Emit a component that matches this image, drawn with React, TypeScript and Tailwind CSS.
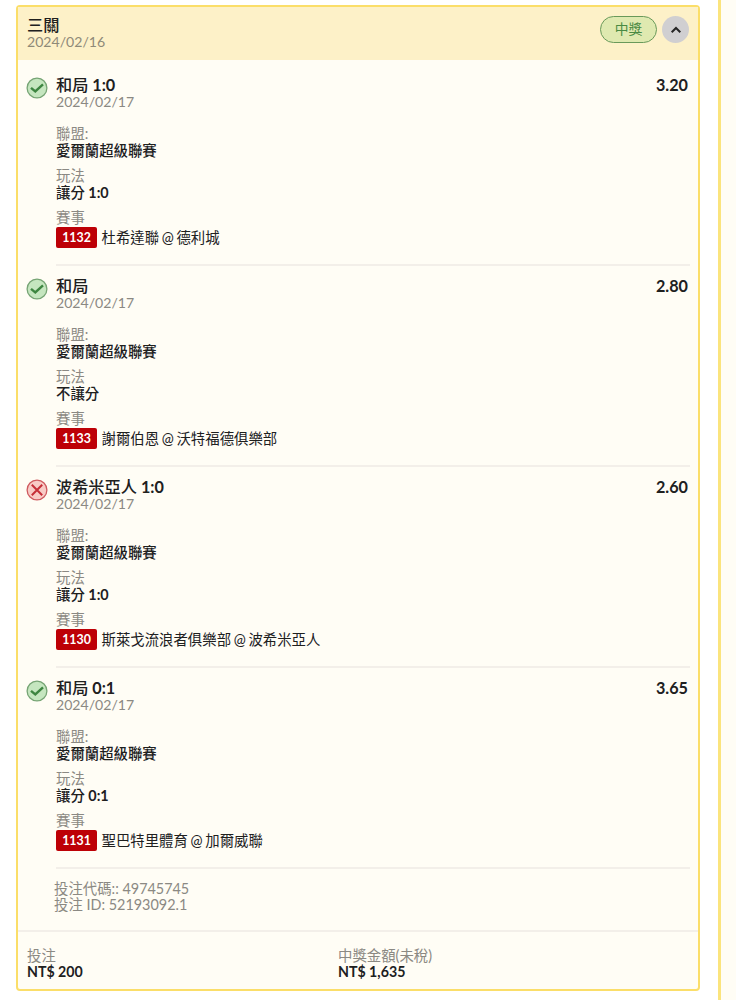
import { clsx } from "clsx";

interface Leg {
  pick: string;
  date: string;
  odds: string;
  won: boolean;
  league: string;
  market: string;
  code: string;
  match: string;
}

const LEGS: Leg[] = [
  {
    pick: "和局 1:0",
    date: "2024/02/17",
    odds: "3.20",
    won: true,
    league: "愛爾蘭超級聯賽",
    market: "讓分 1:0",
    code: "1132",
    match: "杜希達聯 @ 德利城",
  },
  {
    pick: "和局",
    date: "2024/02/17",
    odds: "2.80",
    won: true,
    league: "愛爾蘭超級聯賽",
    market: "不讓分",
    code: "1133",
    match: "謝爾伯恩 @ 沃特福德俱樂部",
  },
  {
    pick: "波希米亞人 1:0",
    date: "2024/02/17",
    odds: "2.60",
    won: false,
    league: "愛爾蘭超級聯賽",
    market: "讓分 1:0",
    code: "1130",
    match: "斯萊戈流浪者俱樂部 @ 波希米亞人",
  },
  {
    pick: "和局 0:1",
    date: "2024/02/17",
    odds: "3.65",
    won: true,
    league: "愛爾蘭超級聯賽",
    market: "讓分 0:1",
    code: "1131",
    match: "聖巴特里體育 @ 加爾威聯",
  },
];

function ResultIcon({ won }: { won: boolean }) {
  return (
    <svg
      viewBox="0 0 22 22"
      fill="none"
      className={clsx("h-[22px] w-[22px] shrink-0", won ? "text-[#3d8540]" : "text-[#c62f38]")}
    >
      <circle
        cx="11"
        cy="11"
        r="9.9"
        fill={won ? "#c5e6bf" : "#f8cbc6"}
        stroke={won ? "#76a474" : "#cf5a5f"}
        strokeWidth="1.3"
      />
      {won ? (
        <path d="M5 10.8 9.3 14.5 17 7.3" stroke="currentColor" strokeWidth="2.4" />
      ) : (
        <path d="M5.8 5.8 16.2 16.2M16.2 5.8 5.8 16.2" stroke="currentColor" strokeWidth="2" />
      )}
    </svg>
  );
}

/** Chinese stays medium, a trailing score such as "1:0" goes bold. */
function Scored({ text }: { text: string }) {
  const [name, score] = text.split(" ");
  return (
    <span className="font-medium">
      {name}
      {score && <span className="font-bold"> {score}</span>}
    </span>
  );
}

function LegRow({ leg, first }: { leg: Leg; first: boolean }) {
  return (
    <div className={clsx("flex pr-2 pl-2", first ? "pt-[17px]" : "pt-[12px]")}>
      <div className="w-[30px] shrink-0">
        <ResultIcon won={leg.won} />
      </div>
      <div className="min-w-0 flex-1 border-b-2 border-[#f3efe9] pb-4">
        <div className="flex h-[17px] items-center justify-between text-[16.2px] text-[#20201e]">
          <Scored text={leg.pick} />
          <span className="pr-[2px] font-bold">{leg.odds}</span>
        </div>
        <div className="h-4 text-[14.1px] leading-4 text-[#8b8983]">{leg.date}</div>
        <div className="mt-4 h-4 leading-4 text-[#8b8983]">聯盟:</div>
        <div className="h-[17px] leading-[17px] text-[#20201e]">
          <Scored text={leg.league} />
        </div>
        <div className="mt-[9px] h-4 leading-4 text-[#8b8983]">玩法</div>
        <div className="h-[17px] leading-[17px] text-[#20201e]">
          <Scored text={leg.market} />
        </div>
        <div className="mt-[9px] h-4 leading-4 text-[#8b8983]">賽事</div>
        <div className="mt-px flex h-[21px] items-center">
          <span className="flex h-[21px] w-[41px] items-center justify-center rounded-[2px] bg-[#bd0006] pt-px text-[12.4px] font-bold text-white">
            {leg.code}
          </span>
          <span className="ml-[4.5px] [word-spacing:-1px] text-[#20201e]">{leg.match}</span>
        </div>
      </div>
    </div>
  );
}

function Total({ label, value, className }: { label: string; value: string; className?: string }) {
  return (
    <div className={clsx("leading-4", className)}>
      <div className="text-[#8b8983]">{label}</div>
      <div className="text-[14.2px] font-bold text-[#20201e]">{value}</div>
    </div>
  );
}

export default function App() {
  return (
    <div className="flex h-[1000px] w-[736px] overflow-hidden bg-white pl-4 font-['Lato','Noto_Sans_CJK_TC',sans-serif] text-[14.4px]">
      <div className="mt-[5px] flex h-[986px] w-[684px] shrink-0 flex-col rounded-[4px] border-[2.5px] border-[#fbde69] bg-[#fffdf5]">
        <div className="flex h-[53px] shrink-0 items-start justify-between bg-[#fdf1c8] pr-[9px] pl-[9px]">
          <div className="pt-[9px]">
            <div className="h-[18px] text-[16.2px] leading-[18px] font-medium text-[#20201e]">三關</div>
            <div className="h-4 text-[14.1px] leading-4 text-[#8f8a78]">2024/02/16</div>
          </div>
          <div className="flex items-center gap-[5px] pt-[9px]">
            <span className="flex h-[27px] w-[57px] items-center justify-center rounded-full border-[1.5px] border-[#69995a] bg-[#dfe9b0] text-[13.8px] text-[#4a8a43]">
              中獎
            </span>
            <button className="flex h-[27px] w-[27px] items-center justify-center rounded-full bg-[#d0cfd1]">
              <svg viewBox="0 0 12 8" fill="none" className="h-2 w-3">
                <path d="M1.7 6.3 6 2 10.3 6.3" stroke="#252525" strokeWidth="2" />
              </svg>
            </button>
          </div>
        </div>

        {LEGS.map((leg, i) => (
          <LegRow key={leg.code} leg={leg} first={i === 0} />
        ))}

        <div className="h-[61px] shrink-0 pt-[12px] pl-9 leading-4 text-[#8b8983]">
          <div>投注代碼:: 49745745</div>
          <div>投注 ID: 52193092.1</div>
        </div>

        <div className="flex flex-1 border-t-2 border-[#f3efe9] pt-[16px] pl-[9px]">
          <Total label="投注" value="NT$ 200" className="w-[311px]" />
          <Total label="中獎金額(未稅)" value="NT$ 1,635" />
        </div>
      </div>

      <div className="ml-[18px] flex-1 border-l-[3px] border-[#fbe47d] bg-[#fffdf5]" />
    </div>
  );
}
